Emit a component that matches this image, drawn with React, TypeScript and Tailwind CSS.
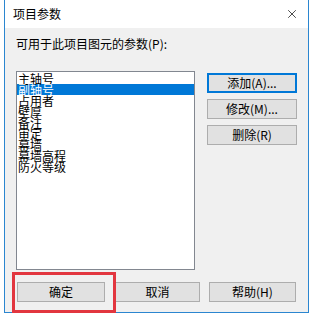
import { X } from 'lucide-react';

const items = ['主轴号', '副轴号', '占用者', '壁厚', '备注', '审定', '幕墙', '幕墙高程', '防火等级'];

const Btn = ({ label, w, focus }: { label: string; w: string; focus?: boolean }) => (
  <div
    className={`h-[20px] ${w} flex items-center justify-center bg-[#e1e1e1] text-[12px] leading-none text-black ${
      focus ? 'border-2 border-[#0078d7]' : 'border border-[#adadad]'
    }`}
  >
    {label}
  </div>
);

export default function App() {
  return (
    <div
      className="relative w-[311px] h-[316px] bg-white overflow-hidden"
      style={{ fontFamily: '"Noto Sans CJK SC", "Liberation Sans", sans-serif' }}
    >
      {/* dialog window */}
      <div className="ml-[4px] w-[305px] h-[313px] flex flex-col border-x border-b border-[#2b86d0]">
        <div className="h-[28px] shrink-0 flex items-center justify-between bg-white pl-[8px] pr-[9px]">
          <span className="text-[12px] text-black">项目参数</span>
          <X size={14} strokeWidth={1.2} className="text-black" />
        </div>

        <div className="flex-1 bg-[#f0f0f0] pl-[11px]">
          <div className="pt-[10px] text-[12px] leading-[12px] text-black">可用于此项目图元的参数(P):</div>

          <div className="flex mt-[21px]">
            <div className="w-[179px] h-[199px] bg-white border border-[#828790] pt-[1px]">
              {items.map((it, i) => (
                <div
                  key={it}
                  className={`h-[11px] leading-[11px] text-[12px] px-[1px] ${
                    i === 1 ? 'bg-[#0078d7] text-white' : 'text-black'
                  }`}
                >
                  {it}
                </div>
              ))}
            </div>

            <div className="ml-[12px] pt-[2px] flex flex-col gap-[6px]">
              <Btn label="添加(A)..." w="w-[90px]" focus />
              <Btn label="修改(M)..." w="w-[90px]" />
              <Btn label="删除(R)" w="w-[90px]" />
            </div>
          </div>

          <div className="flex mt-[12px] pl-[1px]">
            <Btn label="确定" w="w-[88px]" />
            <div className="ml-[10px]">
              <Btn label="取消" w="w-[85px]" />
            </div>
            <div className="ml-[9px]">
              <Btn label="帮助(H)" w="w-[87px]" />
            </div>
          </div>
        </div>
      </div>

      {/* highlight box */}
      <div className="absolute left-[12px] top-[272px] w-[104px] h-[41px] border-[3px] border-[#e2363f]" />
    </div>
  );
}
